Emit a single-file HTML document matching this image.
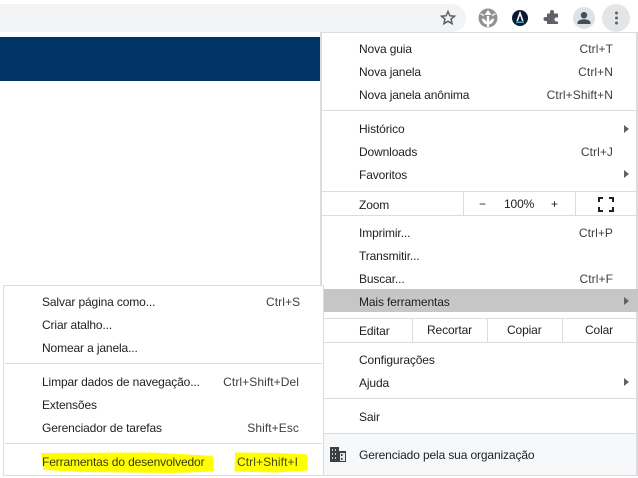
<!DOCTYPE html>
<html><head><meta charset="utf-8"><style>
html,body{margin:0;padding:0}
body{width:638px;height:478px;overflow:hidden;background:#fff;position:relative;font-family:"Liberation Sans",sans-serif;font-size:12px;color:#202124}
div{position:absolute;box-sizing:border-box}
.t{white-space:nowrap;line-height:16px;height:16px;letter-spacing:-.13px}
.k{white-space:nowrap;line-height:16px;height:16px;letter-spacing:.08px;text-align:right;color:#3c4043}
.l{background:#dadce0;height:1px}
.v{background:#dadce0;width:1px}
.a{width:0;height:0;border-left:5px solid #5f6368;border-top:4px solid transparent;border-bottom:4px solid transparent;left:624px}
</style></head><body>
<div style="left:0;top:0;width:638px;height:32px;background:#fff"></div>
<div style="left:0;top:4px;width:466px;height:28px;background:#f1f3f4;border-radius:0 14px 14px 0"></div>
<div style="left:0;top:32px;width:638px;height:1px;background:#dadce0;clip-path:inset(0 0 0 320px)"></div>
<svg style="position:absolute;left:0;top:0" width="638" height="33" viewBox="0 0 638 33">
<path d="M448 11.500l1.900 4.300 4.600.4-3.500 3 1.100 4.500-4.100-2.400-4.100 2.400 1.100-4.500-3.500-3 4.600-.4z" fill="none" stroke="#5f6368" stroke-width="1.500"/>
<circle cx="488" cy="18" r="9.500" fill="#909294"/>
<path d="M488 27v-11" stroke="#fff" stroke-width="2.200" fill="none"/>
<path d="M484.500 15l3.500-5 3.500 5z" fill="#fff"/>
<path d="M488 24c-1-3-3-5-6-5.500 0 3 2 6 6 6zM488 24c1-3 3-5 6-5.500 0 3-2 6-6 6z" fill="#fff"/>
<path d="M480.500 14c1.500 0 2.500 1 3 2M495.500 14c-1.500 0-2.500 1-3 2" stroke="#fff" stroke-width="1.300" fill="none"/>
<circle cx="520" cy="18" r="8" fill="#0b1b2e"/>
<path d="M517.200 21l2.800-8 2.800 8" fill="none" stroke="#fff" stroke-width="1.500"/>
<rect x="516" y="21.500" width="8" height="1.500" fill="#3fa7d6"/>
<path d="M547 15.500h3v-1.500a2 2 0 0 1 4 0v1.500h4v4h-1.500a2 2 0 0 0 0 4h1.500v2.500h-11V23h-1.500a2 2 0 0 1 0-4h1.500z" fill="#5f6368" transform="translate(0,-2)"/>
<circle cx="584" cy="18" r="11" fill="#dee1e6"/>
<circle cx="584" cy="15.200" r="3.200" fill="#444f5c"/>
<path d="M577.500 24v-1.500c0-2 4-3.200 6.500-3.200s6.500 1.200 6.500 3.200V24z" fill="#444f5c"/>
<circle cx="616" cy="18" r="14" fill="#e4e5e7"/>
<circle cx="616.500" cy="13" r="1.500" fill="#5f6368"/>
<circle cx="616.500" cy="18" r="1.500" fill="#5f6368"/>
<circle cx="616.500" cy="23" r="1.500" fill="#5f6368"/>
</svg>
<div style="left:0;top:37px;width:320px;height:44px;background:#003466"></div>

<div style="left:320px;top:32px;width:318px;height:444px;background:#fff;border:2px solid #dadce0;border-top:1px solid #dadce0;border-bottom:1px solid #dadce0"></div>
<div class="t" style="left:359px;top:41px">Nova guia</div><div class="k" style="right:25px;top:41px">Ctrl+T</div>
<div class="t" style="left:359px;top:64px">Nova janela</div><div class="k" style="right:25px;top:64px">Ctrl+N</div>
<div class="t" style="left:359px;top:87px">Nova janela anônima</div><div class="k" style="right:25px;top:87px">Ctrl+Shift+N</div>
<div class="l" style="left:322px;top:110px;width:314px"></div>
<div class="t" style="left:359px;top:121px">Histórico</div><div class="a" style="top:125px"></div>
<div class="t" style="left:359px;top:144px">Downloads</div><div class="k" style="right:25px;top:144px">Ctrl+J</div>
<div class="t" style="left:359px;top:167px">Favoritos</div><div class="a" style="top:170px"></div>
<div class="l" style="left:322px;top:191px;width:314px"></div>
<div class="t" style="left:359px;top:197px">Zoom</div>
<div class="v" style="left:463px;top:191px;height:25px"></div>
<div class="t" style="left:479px;top:196px">−</div>
<div class="t" style="left:504px;top:196px">100%</div>
<div class="t" style="left:551px;top:196px">+</div>
<div class="v" style="left:575px;top:191px;height:25px"></div>
<svg style="position:absolute;left:598px;top:197px" width="16" height="15" viewBox="0 0 16 15"><path d="M1 5V1h4M11 1h4v4M15 10v4h-4M5 14H1v-4" fill="none" stroke="#202124" stroke-width="2"/></svg>
<div class="l" style="left:322px;top:215px;width:314px"></div>
<div class="t" style="left:359px;top:225px">Imprimir...</div><div class="k" style="right:25px;top:225px">Ctrl+P</div>
<div class="t" style="left:359px;top:248px">Transmitir...</div>
<div class="t" style="left:359px;top:271px">Buscar...</div><div class="k" style="right:25px;top:271px">Ctrl+F</div>
<div style="left:324px;top:289px;width:314px;height:23px;background:#c6c6c6"></div>
<div class="t" style="left:359px;top:294px">Mais ferramentas</div><div class="a" style="top:297px"></div>
<div class="l" style="left:324px;top:318px;width:312px"></div>
<div class="t" style="left:359px;top:323px">Editar</div>
<div class="v" style="left:412px;top:318px;height:25px"></div>
<div class="t" style="left:427px;top:322px">Recortar</div>
<div class="v" style="left:487px;top:318px;height:25px"></div>
<div class="t" style="left:507px;top:322px">Copiar</div>
<div class="v" style="left:562px;top:318px;height:25px"></div>
<div class="t" style="left:585px;top:322px">Colar</div>
<div class="l" style="left:324px;top:342px;width:312px"></div>
<div class="t" style="left:359px;top:352px">Configurações</div>
<div class="t" style="left:359px;top:375px">Ajuda</div><div class="a" style="top:378px"></div>
<div class="l" style="left:322px;top:398px;width:314px"></div>
<div class="t" style="left:359px;top:409px">Sair</div>
<div style="left:322px;top:433px;width:314px;height:42px;background:#f7f8f9;border-top:1px solid #dadce0"></div>
<svg style="position:absolute;left:330px;top:447px" width="17" height="15" viewBox="0 0 17 15"><path d="M0 0h9v4h7v11H0z" fill="#3c4043"/><path d="M2 2h1v2H2zM5 2h1v2H5zM2 6h1v2H2zM5 6h1v2H5zM2 10h1v2H2zM5 10h1v2H5z" fill="#c8c8c8"/><path d="M10 6h5v8h-5z" fill="#e8e8e8"/><path d="M11 7h1.500v2H11zM11 11h1.500v2H11z" fill="#3c4043"/></svg>
<div class="t" style="left:359px;top:447px">Gerenciado pela sua organização</div>

<div style="left:3px;top:285px;width:321px;height:191px;background:#fff;border:1px solid #dadce0"></div>
<div class="t" style="left:42px;top:294px">Salvar página como...</div><div class="k" style="left:266px;top:294px">Ctrl+S</div>
<div class="t" style="left:42px;top:317px">Criar atalho...</div>
<div class="t" style="left:42px;top:340px">Nomear a janela...</div>
<div class="l" style="left:5px;top:363px;width:317px"></div>
<div class="t" style="left:42px;top:374px">Limpar dados de navegação...</div><div class="k" style="right:339px;top:374px">Ctrl+Shift+Del</div>
<div class="t" style="left:42px;top:397px">Extensões</div>
<div class="t" style="left:42px;top:420px">Gerenciador de tarefas</div><div class="k" style="right:339px;top:420px">Shift+Esc</div>
<div class="l" style="left:5px;top:443px;width:317px"></div>
<svg style="position:absolute;left:38px;top:451px" width="272" height="24" viewBox="0 0 272 24"><path d="M3 2l110-.5 56 3 6 1 .5 15-40 1.500-92-1-38-2z" fill="#ffff00"/><path d="M197 1.500l45 .5 27 1.500.5 16-30 2-43-1z" fill="#ffff00"/></svg>
<div class="t" style="left:42px;top:454px;color:#3a3a10">Ferramentas do desenvolvedor</div>
<div class="k" style="left:237px;top:454px;color:#4a4a10">Ctrl+Shift+I</div>
</body></html>
